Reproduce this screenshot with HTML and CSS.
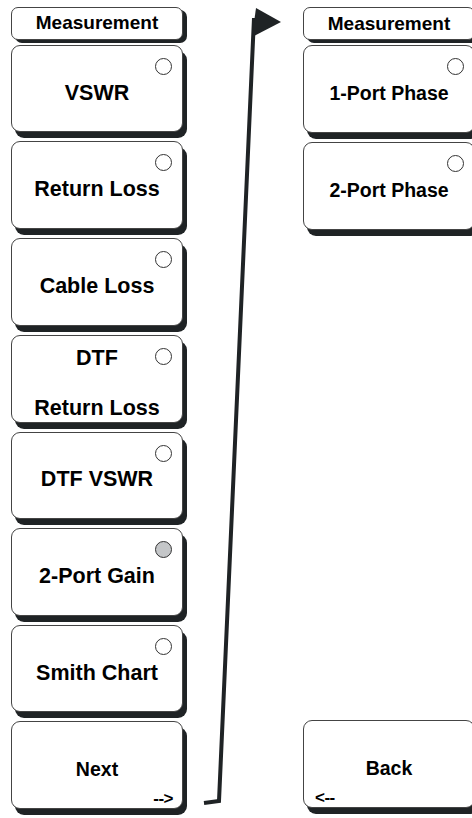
FILE: index.html
```html
<!DOCTYPE html>
<html>
<head>
<meta charset="utf-8">
<link rel="stylesheet" href="styles.css">
</head>
<body>
<div class="screen">
  <div class="col">
    <div class="hdr">Measurement</div>
    <div class="key"><span class="lbl">VSWR</span><span class="led"></span></div>
    <div class="key"><span class="lbl">Return Loss</span><span class="led"></span></div>
    <div class="key"><span class="lbl">Cable Loss</span><span class="led"></span></div>
    <div class="key"><span class="lbl two">DTF<br>Return Loss</span><span class="led"></span></div>
    <div class="key"><span class="lbl">DTF VSWR</span><span class="led"></span></div>
    <div class="key"><span class="lbl">2-Port Gain</span><span class="led on"></span></div>
    <div class="key"><span class="lbl">Smith Chart</span><span class="led"></span></div>
    <div class="key"><span class="lbl sm">Next</span><span class="nav fwd">--&gt;</span></div>
  </div>
  <svg class="link" width="120" height="818" viewBox="0 0 120 818">
    <polyline points="71,18 36,801 21,803" fill="none" stroke="#1f2325" stroke-width="4" stroke-linejoin="miter"/>
    <polygon points="73,8 98,22 69,37" fill="#1f2325"/>
  </svg>
  <div class="col right">
    <div class="hdr">Measurement</div>
    <div class="key"><span class="lbl sm">1-Port Phase</span><span class="led"></span></div>
    <div class="key"><span class="lbl sm">2-Port Phase</span><span class="led"></span></div>
    <div class="key back"><span class="lbl sm">Back</span><span class="nav rev">&lt;--</span></div>
  </div>
</div>
</body>
</html>
```
FILE: styles.css
```css
html, body {
  margin: 0;
  padding: 0;
  background: #ffffff;
  overflow: hidden;
}
.screen {
  display: flex;
  width: 472px;
  height: 818px;
  overflow: hidden;
  font-family: "Liberation Sans", Arial, sans-serif;
  font-weight: bold;
  color: #000;
}
.col {
  flex: none;
  width: 172px;
  margin-left: 11px;
  padding-top: 7px;
  display: flex;
  flex-direction: column;
}
.col.right {
  margin-left: 0;
  height: 818px;
  box-sizing: border-box;
}
.link {
  flex: none;
  display: block;
}
.hdr {
  height: 33px;
  box-sizing: border-box;
  border: 1px solid #444;
  border-radius: 7px;
  box-shadow: 4px 3px 0 #1f2325;
  background: #fff;
  display: flex;
  align-items: center;
  justify-content: center;
  font-size: 19px;
  margin-bottom: 5px;
}
.key {
  position: relative;
  height: 88px;
  box-sizing: border-box;
  border: 1px solid #444;
  border-radius: 9px;
  box-shadow: 4px 6px 0 #1f2325;
  background: #fff;
  display: flex;
  align-items: center;
  justify-content: center;
  padding-top: 8px;
  margin-bottom: 9px;
}
.lbl {
  font-size: 21.5px;
  text-align: center;
  line-height: 24px;
}
.lbl.two {
  line-height: 50px;
}
.lbl.sm {
  font-size: 19.5px;
}
.key.back {
  margin-top: auto;
  margin-bottom: 10px;
}
.led {
  position: absolute;
  top: 12px;
  right: 10px;
  width: 17px;
  height: 17px;
  box-sizing: border-box;
  border: 1px solid #333;
  border-radius: 50%;
  background: #fff;
}
.led.on {
  background: #c4c6c8;
}
.nav {
  position: absolute;
  bottom: -1px;
  font-size: 17px;
  letter-spacing: -0.5px;
}
.nav.fwd {
  right: 9px;
}
.nav.rev {
  left: 11px;
}
```
